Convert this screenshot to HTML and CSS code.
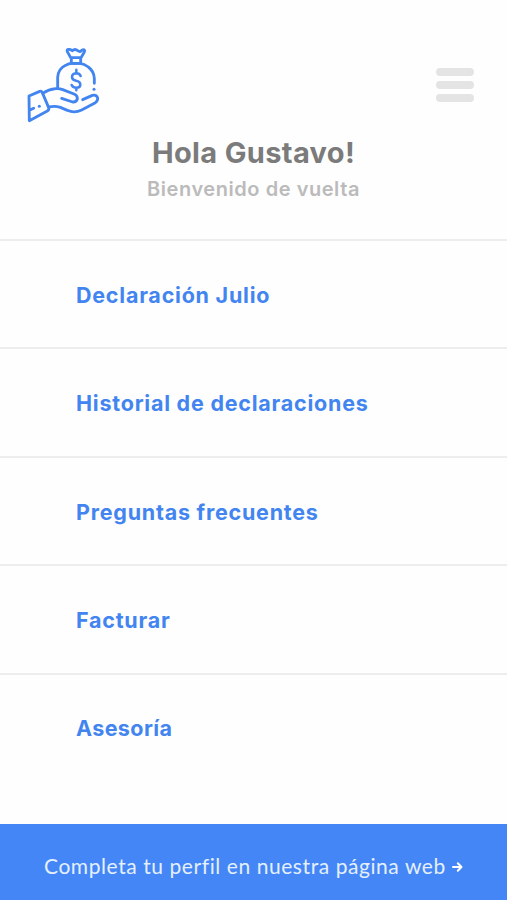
FILE: index.html
```html
<!DOCTYPE html>
<html lang="es">
<head>
<meta charset="utf-8">
<meta name="viewport" content="width=device-width, initial-scale=1">
<title>Inicio</title>
<link rel="stylesheet" href="styles.css">
</head>
<body>
<div class="app">
  <header class="header">
    <div class="topbar">
      <svg class="logo" viewBox="0 0 270 270" aria-hidden="true">
        <path d="M158 53 148 35Q145 27 154 28Q159 29 163 32Q171 25 179 32Q187 38 192 30Q203 27 199 36L189 53M160 53H188V70H160Z"/>
        <path d="M119 144V112Q121 86 143 76Q151 70 163 70H185Q199 71 211 81Q228 94 229 115V130"/>
        <path class="currency" d="M188 108Q185 100 174 100Q162 101 162 111Q162 120 174 122Q187 124 187 134Q187 143 175 143Q164 143 161 135M175 89V100M175 143V151"/>
        <path d="M33 168 65 154Q70 152 73 158L92 203Q94 209 88 213L34 242ZM34 211 47 205"/>
        <path d="M74 160Q92 148 113 146Q124 145 134 149L168 162Q179 166 178 177Q175 187 164 186L131 175M194 179 223 166Q236 163 239 174Q240 182 232 188L191 210Q169 221 148 211L127 202Q111 197 92 201"/>
        <circle class="dot" cx="228" cy="148" r="4.5"/>
        <circle class="dot" cx="64" cy="199" r="4.5"/>
      </svg>
      <button class="menu-button" aria-label="Menú"><span></span><span></span><span></span></button>
    </div>
    <h1 class="greeting">Hola Gustavo!</h1>
    <p class="welcome">Bienvenido de vuelta</p>
  </header>
  <nav class="menu">
    <a class="item declaration">Declaración Julio</a>
    <a class="item history">Historial de declaraciones</a>
    <a class="item questions">Preguntas frecuentes</a>
    <a class="item invoice">Facturar</a>
    <a class="item advice">Asesoría</a>
  </nav>
  <footer class="footer">
    <span class="footer-text">Completa tu perfil en nuestra página web</span>
    <svg class="arrow" viewBox="0 0 11 12" aria-hidden="true"><path d="M1 6H9M5.8 2.2 9.5 6 5.8 9.8"/></svg>
  </footer>
</div>
</body>
</html>
```
FILE: styles.css
```css
* { box-sizing: border-box; }
body { margin: 0; background: #fefefe; font-family: Inter, Lato, sans-serif; }
.app { height: 900px; display: flex; flex-direction: column; overflow: hidden; }
.header { height: 239px; padding-top: 40px; text-align: center; flex: none; }
.topbar { height: 90px; padding: 0 33px 0 18px; display: flex; justify-content: space-between; align-items: center; }
.logo { width: 90px; height: 90px; fill: none; stroke: #4385f0; stroke-width: 8.5; stroke-linecap: round; stroke-linejoin: round; }
.logo .currency { stroke-width: 7.5; }
.logo .dot { fill: #4385f0; stroke: none; }
.menu-button { width: 38px; padding: 0; border: 0; background: none; display: flex; flex-direction: column; gap: 5.5px; }
.menu-button span { height: 7.5px; border-radius: 4px; background: #e4e4e4; }
.greeting { margin: 4px 0 0; font-size: 29px; line-height: 38px; font-weight: 650; color: #7b7b7b; letter-spacing: .35px; }
.welcome { margin: 3px 0 0; font-size: 20px; line-height: 28px; font-weight: 600; color: #bbb; letter-spacing: .55px; }
.menu { flex: 1; }
.item { height: 108.45px; padding: 1px 76px 0; border-top: 2px solid #ededed; display: flex; align-items: center; font-size: 21.5px; font-weight: 650; color: #4385f0; letter-spacing: .77px; white-space: nowrap; }
.advice { letter-spacing: .4px; }
.footer { height: 76.5px; flex: none; padding: 8px 0 0 44px; background: #4486f5; color: #e4f0ff; display: flex; align-items: center; font-family: Lato, sans-serif; font-size: 21px; letter-spacing: .57px; white-space: nowrap; }
.arrow { width: 11px; height: 12px; margin: 3px 0 0 6px; fill: none; stroke: #fff; stroke-width: 2; stroke-linecap: round; stroke-linejoin: round; }
```
